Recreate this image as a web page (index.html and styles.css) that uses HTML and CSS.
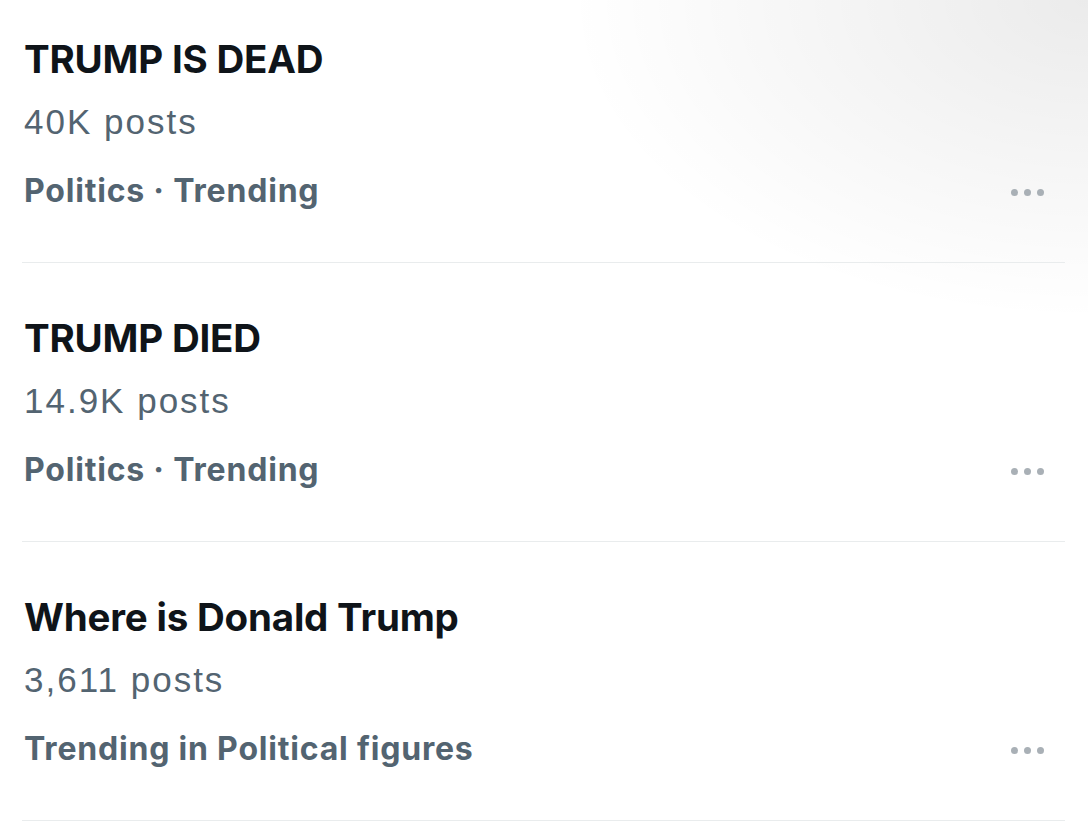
FILE: index.html
```html
<!DOCTYPE html>
<html>
<head>
<meta charset="utf-8">
<link rel="stylesheet" href="styles.css">
</head>
<body>
<div class="list">
  <div class="trend">
    <div class="title">TRUMP IS DEAD</div>
    <div class="count">40K posts</div>
    <div class="meta-row">
      <div class="meta">Politics · Trending</div>
      <div class="dots"><span></span><span></span><span></span></div>
    </div>
  </div>
  <div class="trend">
    <div class="title">TRUMP DIED</div>
    <div class="count">14.9K posts</div>
    <div class="meta-row">
      <div class="meta">Politics · Trending</div>
      <div class="dots"><span></span><span></span><span></span></div>
    </div>
  </div>
  <div class="trend">
    <div class="title">Where is Donald Trump</div>
    <div class="count">3,611 posts</div>
    <div class="meta-row">
      <div class="meta">Trending in Political figures</div>
      <div class="dots"><span></span><span></span><span></span></div>
    </div>
  </div>
</div>
</body>
</html>
```

FILE: styles.css
```css
html, body {
  margin: 0;
  padding: 0;
}
body {
  width: 1088px;
  height: 833px;
  overflow: hidden;
  background: #ffffff;
  background-image: radial-gradient(ellipse 520px 320px at 1088px 0px, rgba(0,0,0,0.08), rgba(0,0,0,0) 100%);
}
.list {
  margin-left: 22px;
  width: 1043px;
}
.trend {
  padding: 51px 0 53px 2px;
  border-bottom: 1.5px solid #e9eced;
}
.trend:first-child {
  padding-top: 35px;
}
.title {
  font-family: Inter, "Liberation Sans", sans-serif;
  font-weight: 700;
  font-size: 38.5px;
  line-height: 48px;
  color: #0f1419;
  letter-spacing: -0.2px;
}
.count {
  font-family: "Liberation Sans", Arial, sans-serif;
  font-size: 35px;
  line-height: 36px;
  margin-top: 21px;
  color: #536471;
  letter-spacing: 2px;
}
.meta-row {
  margin-top: 33px;
  display: flex;
  align-items: center;
  justify-content: space-between;
}
.meta {
  font-family: Inter, "Liberation Sans", sans-serif;
  font-weight: 700;
  font-size: 32px;
  line-height: 36px;
  color: #536471;
  letter-spacing: 0.8px;
}
.dots {
  display: flex;
  gap: 6px;
  margin-right: 21px;
  padding-top: 2px;
}
.dots span {
  width: 7px;
  height: 7px;
  border-radius: 50%;
  background: #a9b0b6;
}
```
